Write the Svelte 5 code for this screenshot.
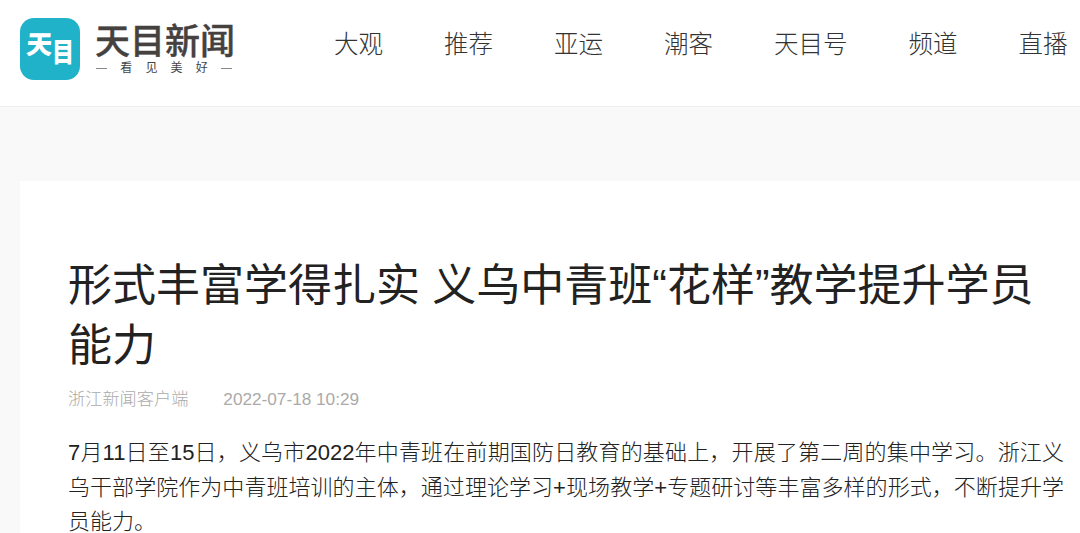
<script lang="ts">
    const nav_items: string[] = ["大观", "推荐", "亚运", "潮客", "天目号", "频道", "直播"];

    const title: string = "形式丰富学得扎实 义乌中青班“花样”教学提升学员能力";
    const paragraph: string = "7月11日至15日，义乌市2022年中青班在前期国防日教育的基础上，开展了第二周的集中学习。浙江义乌干部学院作为中青班培训的主体，通过理论学习+现场教学+专题研讨等丰富多样的形式，不断提升学员能力。";
</script>

<header>
    <div class="logo">
        <div class="badge"><span class="big">天</span><span class="small">目</span></div>
        <div class="brand">
            <div class="name">天目新闻</div>
            <div class="slogan"><i></i><span>看</span><span>见</span><span>美</span><span>好</span><i></i></div>
        </div>
    </div>
    <nav>
        {#each nav_items as item}
            <a href="#top">{item}</a>
        {/each}
    </nav>
</header>

<main>
    <article>
        <h1>{title}</h1>
        <div class="info">
            <span class="source">浙江新闻客户端</span>
            <span class="time">2022-07-18 10:29</span>
        </div>
        <p>{paragraph}</p>
    </article>
</main>

<style>
    :global(body){
        background-color: #f9f9f9;
        font-family: "Liberation Sans", "Noto Sans CJK SC", sans-serif;
        overflow: hidden;
    }
    header{
        display: flex;
        height: 106px;
        background-color: white;
        border-bottom: 1px solid #eee;
    }
    .logo{
        display: flex;
        flex: none;
        width: 314px;
        padding: 18px 0 0 20px;
        box-sizing: border-box;
    }
    .badge{
        display: flex;
        justify-content: center;
        width: 60px;
        height: 62px;
        border-radius: 14px;
        background-color: #20b2c9;
        color: white;
        font-weight: 900;
    }
    .big{
        font-size: 26px;
        line-height: 55px;
        transform: skewX(-4deg);
    }
    .small{
        font-size: 22px;
        line-height: 68px;
        transform: scaleY(1.25);
    }
    .brand{
        width: 136px;
        margin-left: 16px;
    }
    .name{
        margin-left: -1px;
        font-size: 35px;
        line-height: 48px;
        font-weight: 500;
        -webkit-text-stroke: 0.4px #45413f;
        color: #45413f;
        white-space: nowrap;
    }
    .slogan{
        display: flex;
        align-items: center;
        justify-content: space-between;
        margin-top: -4px;
        font-size: 12px;
        line-height: 12px;
        font-weight: 400;
        color: #444;
    }
    .slogan i{
        width: 11px;
        height: 1px;
        background-color: #888;
    }
    nav{
        display: flex;
        gap: 61px;
        margin-left: 20px;
    }
    nav a{
        flex: none;
        font-size: 24.5px;
        line-height: 89px;
        font-weight: 300;
        color: #333;
        text-decoration: none;
        white-space: nowrap;
    }
    main{
        padding: 74px 0 0 20px;
    }
    article{
        height: 352px;
        padding: 75px 16px 0 48px;
        background-color: white;
        box-sizing: border-box;
    }
    h1{
        margin: 0;
        font-size: 44px;
        line-height: 60px;
        font-weight: 400;
        color: #222;
    }
    .info{
        display: flex;
        gap: 35px;
        margin-top: 11px;
        font-size: 17.2px;
        line-height: 24px;
        font-weight: 300;
        color: #aaa;
    }
    p{
        margin: 25px 0 0;
        font-size: 22px;
        line-height: 34.5px;
        font-weight: 300;
        text-align: justify;
        color: #222;
    }
</style>
